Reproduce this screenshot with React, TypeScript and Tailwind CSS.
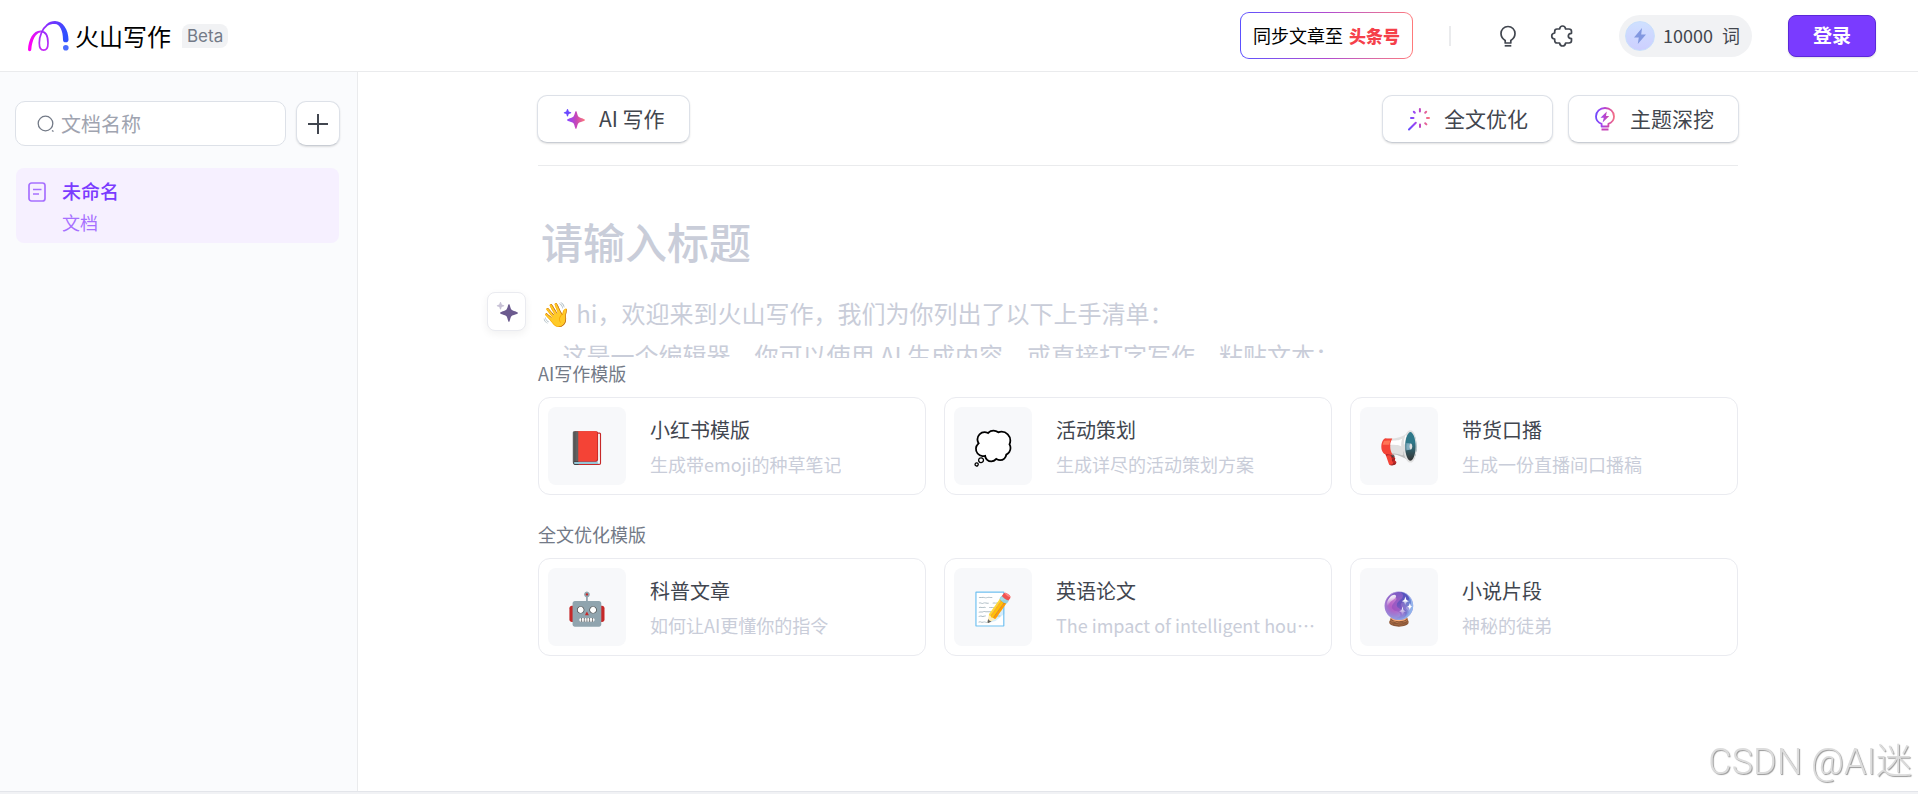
import { useId, type ReactNode } from 'react';

type Template = { icon: string; title: string; desc: string };

const writingTemplates: Template[] = [
  { icon: '📕', title: '小红书模版', desc: '生成带emoji的种草笔记' },
  { icon: '💭', title: '活动策划', desc: '生成详尽的活动策划方案' },
  { icon: '📢', title: '带货口播', desc: '生成一份直播间口播稿' },
];

const polishTemplates: Template[] = [
  { icon: '🤖', title: '科普文章', desc: '如何让AI更懂你的指令' },
  { icon: '📝', title: '英语论文', desc: 'The impact of intelligent housing systems' },
  { icon: '🔮', title: '小说片段', desc: '神秘的徒弟' },
];

const editorHint =
  '👋 hi，欢迎来到火山写作，我们为你列出了以下上手清单：\n\u00a0\u00a0\u00a0\u00a0这是一个编辑器，你可以使用 AI 生成内容，或直接打字写作，粘贴文本：';

function GradientDefs({ id }: { id: string }) {
  return (
    <defs>
      <linearGradient id={id} gradientUnits="userSpaceOnUse" x1="1" y1="12" x2="23" y2="12">
        <stop offset="0" stopColor="#5b4bff" />
        <stop offset="0.3" stopColor="#9b45f5" />
        <stop offset="0.6" stopColor="#c646b8" />
        <stop offset="1" stopColor="#ff7a7a" />
      </linearGradient>
    </defs>
  );
}

function LogoMark() {
  return (
    <svg width="42" height="32" viewBox="0 0 42 32" fill="none" aria-hidden="true">
      <defs>
        <linearGradient id="logo-leg" gradientUnits="userSpaceOnUse" x1="2" y1="28" x2="14" y2="10">
          <stop offset="0" stopColor="#ff00f5" />
          <stop offset="0.5" stopColor="#f008f5" />
          <stop offset="1" stopColor="#b825fb" />
        </linearGradient>
        <linearGradient id="logo-loop" gradientUnits="userSpaceOnUse" x1="16" y1="30" x2="20" y2="4">
          <stop offset="0" stopColor="#c52af5" />
          <stop offset="1" stopColor="#8a2cff" />
        </linearGradient>
        <linearGradient id="logo-arch" gradientUnits="userSpaceOnUse" x1="18" y1="0" x2="40" y2="8">
          <stop offset="0" stopColor="#8f2bff" />
          <stop offset="0.6" stopColor="#5a3dff" />
          <stop offset="1" stopColor="#2f50ff" />
        </linearGradient>
      </defs>
      <path d="M13.500 11.400C19 11.400 21 17 21 23c0 4.500-1.500 7.200-4.400 7.200-2.800 0-4.300-3.200-4.300-7.200 0-7 3.200-14.500 7.900-18" stroke="url(#logo-loop)" strokeWidth="1.700" />
      <path d="M1 29.500C1.500 19.500 6 10.400 13.700 10.400v2.200C8.700 12.600 5 20.500 4.300 29.500a1.650 1.650 0 0 1-3.300 0z" fill="url(#logo-leg)" />
      <path d="M19.300 4.400C22 2 25 1 28 1c8 0 13.500 9 13.500 18.500a2.750 2.750 0 0 1-5.500.2C36 11 33 4.200 28 4c-3-.1-5.500.5-7.500 2z" fill="url(#logo-arch)" />
      <circle cx="38.800" cy="27.800" r="2.800" fill="#4a6bff" />
    </svg>
  );
}

function Sparkles() {
  const id = useId();
  return (
    <svg width="24" height="24" viewBox="0 0 24 24" aria-hidden="true">
      <GradientDefs id={id} />
      <path fill={`url(#${id})`} d="M14 4c.9 0 1.300 4.200 2.400 5.500S23 11.900 23 13s-5.300 1.900-6.600 3.300S14.900 22 14 22s-1.400-4.300-2.500-5.700S5 14.100 5 13s5.300-2.100 6.500-3.500S13.100 4 14 4z" />
      <path fill="#6a48ff" d="M5.500 2c.8 0 .9 1.900 1.300 2.400S9.300 5 9.300 5.700s-2 .8-2.500 1.300-.5 2.500-1.300 2.500-.8-2-1.300-2.500-2.500-.6-2.500-1.300S3.700 5 4.200 4.400 4.700 2 5.500 2z" />
    </svg>
  );
}

function Wand() {
  const id = useId();
  return (
    <svg width="24" height="24" viewBox="0 0 24 24" fill="none" aria-hidden="true">
      <GradientDefs id={id} />
      <path
        stroke={`url(#${id})`}
        strokeWidth="2"
        strokeLinecap="round"
        d="M2 22.500 8.800 15.700M12.900 2v2.500M13 17.500V20M20 11h2M4 11.010h2.500M18.200 5.800l1-1M7.800 5.800l-1-1M18.200 16.200l1.200 1.200"
      />
    </svg>
  );
}

function IdeaBulb() {
  const id = useId();
  return (
    <svg width="24" height="26" viewBox="0 0 24 26" fill="none" aria-hidden="true">
      <GradientDefs id={id} />
      <path
        stroke={`url(#${id})`}
        strokeWidth="1.800"
        strokeLinejoin="round"
        d="M8.600 20.500v-2.600C5.400 16.600 3 13.900 3 10.400 3 5.500 7 2 12 2s9 3.500 9 8.400c0 3.500-2.400 6.200-5.600 7.500v2.600z"
      />
      <path fill={`url(#${id})`} d="M13.800 5.500 7.500 11.800h3.300l-1.200 4.700 6.700-6.400H13z" />
      <path fill="#c646b8" d="M8.500 22.500h7v2h-7z" />
    </svg>
  );
}

function Bulb() {
  return (
    <svg width="24" height="24" viewBox="0 0 24 24" fill="none" stroke="#41464f" strokeWidth="1.700" aria-hidden="true">
      <path d="M9.200 19v-2.500C6.600 14.900 5 12.600 5 9.600 5 5.500 8.100 2.500 12 2.500s7 3 7 7.100c0 3-1.600 5.300-4.200 6.900V19z" strokeLinejoin="round" />
      <path d="M8.700 21.800h6.600" />
    </svg>
  );
}

function Puzzle() {
  return (
    <svg width="24" height="24" viewBox="0 0 24 24" fill="none" stroke="#41464f" strokeWidth="1.700" strokeLinejoin="round" aria-hidden="true">
      <path d="M7 5h2.600c.3-2 1.500-3 3-3s2.700 1 3 3H19c1.500 0 2.500 1 2.500 2.400v1.900c-2 .2-3.200 1.300-3.200 2.700s1.200 2.500 3.200 2.700v1.900c0 1.400-1 2.400-2.500 2.400h-3.400c-.3 2-1.500 3-3 3s-2.700-1-3-3H7c-1.500 0-2.300-1-2.300-2.400V15c-2-.2-3-1.400-3-3s1-2.800 3-3V7.400C4.700 6 5.500 5 7 5z" />
    </svg>
  );
}

function ToolButton({ icon, children }: { icon: ReactNode; children: ReactNode }) {
  return (
    <button
      type="button"
      className="flex h-12 items-center gap-[13px] rounded-[10px] border border-[#dde1e8] border-b-[#c9cdd4] bg-white px-6 text-[21px] text-[#42464e] shadow-[0_1px_2px_rgba(0,0,0,0.12)]"
    >
      {icon}
      <span>{children}</span>
    </button>
  );
}

function TemplateSection({ label, items }: { label: string; items: Template[] }) {
  return (
    <section>
      <h2 className="text-[18px] leading-[30px] text-[#737a87]">{label}</h2>
      <div className="mt-[9px] grid grid-cols-3 gap-[18px]">
        {items.map((item) => (
          <button
            key={item.title}
            type="button"
            className="flex min-w-0 items-center rounded-xl border border-[#eaebf0] bg-white p-[9px] text-left"
          >
            <span className="flex size-[78px] shrink-0 items-center justify-center rounded-lg bg-[#f7f8fa] pb-0.5 text-[32px] leading-none">
              {item.icon}
            </span>
            <span className="ml-6 min-w-0 pt-0.5 pr-[5px]">
              <span className="block text-[20px] leading-8 text-[#41464f]">{item.title}</span>
              <span className="mt-0.5 block truncate text-[18px] leading-8 text-[#c9cdd9]">{item.desc}</span>
            </span>
          </button>
        ))}
      </div>
    </section>
  );
}

export default function App() {
  return (
    <div className="flex min-h-screen flex-col bg-white font-['Noto_Sans_CJK_SC','Noto_Color_Emoji',sans-serif]">
      <header className="flex h-[72px] shrink-0 items-center border-b border-[#eaebed] pr-[42px] pl-[27px]">
        <a href="#" className="flex items-center text-black">
          <LogoMark />
          <span className="ml-[6px] text-[24px] leading-8">火山写作</span>
        </a>
        <span className="ml-[11px] rounded-lg rounded-bl-none bg-[#f1f2f4] px-[5px] font-[Inter,sans-serif] text-[17px] leading-6 text-[#737a87]">
          Beta
        </span>

        <div className="ml-auto flex items-center">
          <button
            type="button"
            className="rounded-[9px] bg-linear-to-r from-[#5b50ff] via-[#b04ad0] to-[#ff7a7a] p-px text-[18px] text-black"
          >
            <span className="flex h-[45px] items-center gap-[6px] rounded-lg bg-white px-3">
              同步文章至
              <span className="text-[17px] font-black text-[#f5404a]">头条号</span>
            </span>
          </button>
          <span className="mr-[45px] ml-9 h-5 w-0.5 bg-[#eaebed]" />
          <button type="button" aria-label="灵感">
            <Bulb />
          </button>
          <button type="button" aria-label="插件" className="ml-[30px]">
            <Puzzle />
          </button>
          <div className="ml-[45px] flex h-[42px] items-center rounded-full bg-[#f1f2f4] pr-3 pl-[6px]">
            <span className="flex size-[30px] items-center justify-center rounded-full border border-[#c9dffc] bg-linear-to-b from-[#cfe0ff] to-[#cdcfff]">
              <svg width="14" height="18" viewBox="0 0 14 18" aria-hidden="true">
                <path d="M9 1 1 10.500h4.800L4.800 17 13 7.500H8.200z" fill="#8298e0" />
              </svg>
            </span>
            <span className="ml-2 text-[18px] text-[#42464e]">10000</span>
            <span className="ml-[9px] text-[18px] text-[#42464e]">词</span>
          </div>
          <button
            type="button"
            className="ml-9 h-[42px] rounded-lg border border-[#5b28d9] bg-[#7a3bff] px-6 text-[19px] font-bold text-white shadow-[0_1px_2px_rgba(0,0,0,0.12)]"
          >
            登录
          </button>
        </div>
      </header>

      <div className="flex flex-1">
        <aside className="w-[358px] shrink-0 border-r border-[#eaebed] bg-[#fafbfd] px-[15px] pt-[29px]">
          <div className="flex gap-[10px]">
            <label className="flex h-[45px] min-w-0 flex-1 items-center rounded-[10px] border border-[#dde1e8] bg-white pl-[21px]">
              <svg width="18" height="18" viewBox="0 0 18 18" fill="none" stroke="#737a87" strokeWidth="1.300" aria-hidden="true">
                <circle cx="8.500" cy="8.500" r="7.300" />
                <path d="M15 15.500l1.500 1" />
              </svg>
              <input
                type="text"
                aria-label="搜索文档"
                placeholder="文档名称"
                className="ml-[6px] min-w-0 flex-1 bg-transparent text-[20px] outline-none placeholder:text-[#9fa4b0]"
              />
            </label>
            <button
              type="button"
              aria-label="新建文档"
              className="mr-[2px] flex h-[45px] w-11 items-center justify-center rounded-[10px] border border-[#dde1e8] border-b-[#c9cdd4] bg-white shadow-[0_1px_2px_rgba(0,0,0,0.12)]"
            >
              <svg width="20" height="20" viewBox="0 0 20 20" stroke="#41464f" strokeWidth="2" aria-hidden="true">
                <path d="M10 0v20M0 10h20" />
              </svg>
            </button>
          </div>

          <a href="#" className="mt-[22px] mr-[3px] ml-px flex rounded-lg bg-[#f6f0ff] py-[6px] pl-3">
            <svg width="18" height="20" viewBox="0 0 18 20" fill="none" stroke="#a770ff" strokeWidth="1.700" className="mt-2" aria-hidden="true">
              <rect x="1" y="1" width="16" height="18" rx="2.500" />
              <path d="M5 7.500h8.500M5 12h6" />
            </svg>
            <span className="ml-4">
              <span className="block text-[19px] leading-[33px] font-medium text-[#7a3bff]">未命名</span>
              <span className="block text-[18px] leading-[30px] text-[#a770ff]">文档</span>
            </span>
          </a>
        </aside>

        <main className="min-w-0 flex-1 px-6">
          <div className="mx-auto max-w-[1200px]">
            <div className="border-b border-[#eaebed] pt-[23px] pb-[22px]">
              <div className="-mx-px flex items-center gap-[15px]">
                <div className="mr-auto">
                  <ToolButton icon={<Sparkles />}>AI 写作</ToolButton>
                </div>
                <ToolButton icon={<Wand />}>全文优化</ToolButton>
                <ToolButton icon={<IdeaBulb />}>主题深挖</ToolButton>
              </div>
            </div>

            <div className="relative pt-[42px]">
              <input
                type="text"
                aria-label="标题"
                placeholder="请输入标题"
                className="block h-16 w-full px-[3px] text-[42px] font-medium outline-none placeholder:text-[#c9cdd9]"
              />
              <textarea
                aria-label="正文"
                placeholder={editorHint}
                className="mt-5 block h-[66px] w-full resize-none overflow-hidden px-[3px] text-[24px] leading-[42px] outline-none placeholder:text-[#c9cdd9]"
              />
              <button
                type="button"
                aria-label="AI 助手"
                className="absolute top-[126px] -left-[51px] flex size-[39px] items-center justify-center rounded-lg border border-[#eaebf0] bg-white shadow-[0_3px_8px_rgba(0,0,0,0.06)]"
              >
                <svg width="24" height="24" viewBox="0 0 24 24" aria-hidden="true">
                  <path fill="#6b5a8e" d="M14 4c.9 0 1.300 4.200 2.400 5.500S23 11.900 23 13s-5.300 1.900-6.600 3.300S14.900 22 14 22s-1.400-4.300-2.500-5.700S5 14.100 5 13s5.300-2.100 6.500-3.500S13.100 4 14 4z" />
                  <path fill="#c8c2d6" d="M5.500 2c.8 0 .9 1.900 1.300 2.400S9.300 5 9.300 5.700s-2 .8-2.500 1.300-.5 2.500-1.300 2.500-.8-2-1.300-2.500-2.500-.6-2.500-1.300S3.700 5 4.200 4.400 4.700 2 5.500 2z" />
                </svg>
              </button>
            </div>

            <div className="flex flex-col gap-6">
              <TemplateSection label="AI写作模版" items={writingTemplates} />
              <TemplateSection label="全文优化模版" items={polishTemplates} />
            </div>
          </div>
        </main>
      </div>

      <div className="h-[3px] border-t border-[#e3e5ea] bg-[#f1f2f5]" />

      <p className="fixed right-[6px] bottom-[5px] font-[Roboto,'Noto_Sans_CJK_SC',sans-serif] text-[36px] leading-[54px] font-light text-[#dcdcdc] [text-shadow:1px_1px_1px_#999]">
        CSDN @AI迷
      </p>
    </div>
  );
}
